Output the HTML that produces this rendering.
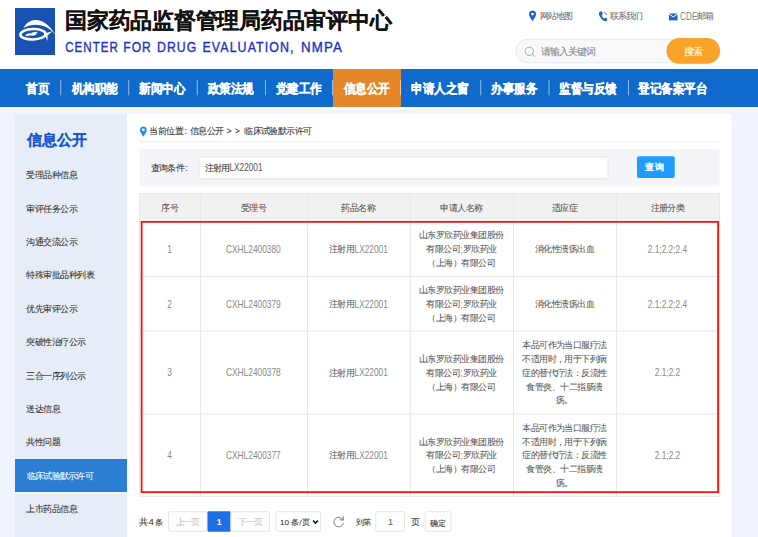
<!DOCTYPE html>
<html><head><meta charset="utf-8">
<style>
*{margin:0;padding:0}
html,body{width:758px;height:537px;overflow:hidden;background:#fff}
#root{position:absolute;left:0;top:0;width:3032.00px;height:2148.00px;transform:scale(0.25);transform-origin:0 0;font-family:"Liberation Sans",sans-serif;color:#333}
.a{position:absolute}
.t{white-space:nowrap;-webkit-text-stroke:0.3px currentColor}
.l{display:inline-block;transform-origin:0 50%;vertical-align:top;-webkit-text-stroke:0;opacity:.85;letter-spacing:0}
.tc .l{opacity:.72}
.en{font-weight:normal;-webkit-text-stroke:1.5px #1e34c4;color:#1e34c4;white-space:nowrap;transform-origin:0 0}
</style></head><body><div id="root">
<div class="a" style="left:0;top:0;width:3032.00px;height:276.00px;background:#fff"></div>
<svg class="a" style="left:60.00px;top:32.00px;width:160.00px;height:188.00px" viewBox="0 0 40 47">
<rect width="40" height="47" fill="#1852b2"/>
<path d="M8.5 20 C14 8.5 31 7.5 42 30 C36 17.5 21 13 8.5 20Z" fill="#fff"/>
<ellipse cx="18" cy="26.3" rx="12.6" ry="5.2" fill="none" stroke="#fff" stroke-width="2.5" transform="rotate(-2 18 26)"/>
<path d="M29 25.5 L37 23.5 L32.5 27.5 L32.5 33 Z" fill="#fff"/>
<path d="M10.2 28 C10.8 25.6 13.5 24.8 16.2 25.4 C17.5 24.2 19 23.6 20.2 24.2 C20.6 23.6 21.6 23.4 22.4 24 C21.8 26.4 19.5 28 16.8 27.6 C14.5 27.3 12.2 28.3 10.2 28Z" fill="#fff"/>
</svg>
<div class="a t" style="left:260.12px;top:29.60px;font-size:87.00px;line-height:104.00px;font-weight:bold;color:#111;-webkit-text-stroke:1.20px #111">国家药品监督管理局药品审评中心</div>
<div class="a en" style="left:260.82px;top:159.60px;font-size:55.60px;line-height:55.60px;letter-spacing:4.80px;transform:scaleX(0.8323)">CENTER</div>
<div class="a en" style="left:492.70px;top:159.60px;font-size:55.60px;line-height:55.60px;letter-spacing:4.80px;transform:scaleX(0.8698)">FOR</div>
<div class="a en" style="left:627.86px;top:159.60px;font-size:55.60px;line-height:55.60px;letter-spacing:4.80px;transform:scaleX(0.8810)">DRUG</div>
<div class="a en" style="left:810.22px;top:159.60px;font-size:55.60px;line-height:55.60px;letter-spacing:4.80px;transform:scaleX(0.8934)">EVALUATION,</div>
<div class="a en" style="left:1203.60px;top:159.60px;font-size:55.60px;line-height:55.60px;letter-spacing:4.80px;transform:scaleX(0.9583)">NMPA</div>
<svg class="a" style="left:2115.20px;top:41.20px;width:30.00px;height:44.80px" viewBox="0 0 8 12"><path d="M4 0.3C1.8 0.3 0.2 2 0.2 4.1 0.2 6.9 4 11.7 4 11.7S7.8 6.9 7.8 4.1C7.8 2 6.2 0.3 4 0.3Z" fill="#1c62c8"/><circle cx="4" cy="4.1" r="1.5" fill="#fff"/></svg>
<div class="a t" style="left:2158.51px;top:38.70px;font-size:37.18px;line-height:49.80px;color:#6f6f6f;letter-spacing:-3.98px">网站地图</div>
<svg class="a" style="left:2394.00px;top:43.60px;width:36.00px;height:42.40px" viewBox="0 0 9 11"><path d="M1.6 0.6 L3.3 0.3 L4.4 3.2 L3.1 4.3 C3.6 5.8 4.6 7.1 5.8 7.9 L7 6.7 L9 8 L8.7 9.8 C8 10.6 6.8 10.8 5.4 10.1 C3 8.8 1 6.3 0.4 3.7 C0 2.2 0.6 1 1.6 0.6Z" fill="#1c62c8"/><path d="M5.2 1.2 C6.8 1.5 7.9 2.6 8.2 4.2" fill="none" stroke="#1c62c8" stroke-width="0.9"/></svg>
<div class="a t" style="left:2438.51px;top:38.70px;font-size:37.18px;line-height:49.80px;color:#6f6f6f;letter-spacing:-3.98px">联系我们</div>
<svg class="a" style="left:2675.20px;top:52.80px;width:36.00px;height:29.60px" viewBox="0 0 9 7.4"><path d="M0 0.9 L4.5 4.3 L9 0.9 L9 7.4 L0 7.4Z" fill="#1c62c8"/><path d="M0.3 0 L8.7 0 L4.5 3.2Z" fill="#1c62c8"/></svg>
<div class="a t" style="left:2720.18px;top:39.90px;font-size:35.39px;line-height:47.40px;color:#6f6f6f;letter-spacing:-3.79px"><span class="l" style="font-size:42.83px;transform:scaleX(0.77);margin-right:-20.79px">CDE</span>邮箱</div>
<div class="a" style="left:2062.00px;top:155.20px;width:818.00px;height:98.00px;border:4.00px solid #e6e7ea;border-radius:50.00px;background:#f8f9fb;box-sizing:border-box"></div>
<svg class="a" style="left:2098.00px;top:186.00px;width:44.80px;height:42.40px" viewBox="0 0 11.2 10.6"><circle cx="4.8" cy="4.8" r="4.2" fill="none" stroke="#a0a0a0" stroke-width="0.95"/><path d="M8 7.9 L10.7 10.3" stroke="#a0a0a0" stroke-width="1"/></svg>
<div class="a t" style="left:2165.21px;top:180.10px;font-size:39.87px;line-height:53.40px;color:#858585;letter-spacing:-4.27px">请输入关键词</div>
<div class="a" style="left:2666.00px;top:152.00px;width:214.00px;height:102.80px;border-radius:52.00px;background:#f9a32b"></div>
<div class="a t" style="left:2735.15px;top:179.60px;font-size:41.22px;line-height:55.20px;color:#fff;letter-spacing:-4.42px">搜索</div>
<div class="a" style="left:0.00px;top:276.40px;width:3032.00px;height:152.40px;background:#106acb"></div>
<div class="a" style="left:1332.00px;top:276.40px;width:272.00px;height:152.40px;background:#e5862b"></div>
<div class="a t" style="left:104.17px;top:321.25px;font-size:45.80px;line-height:68.70px;color:#fff;font-weight:bold;-webkit-text-stroke:1.5px #fff;transform:scaleY(1.12);transform-origin:0 50%">首页</div>
<div class="a t" style="left:286.17px;top:321.25px;font-size:45.80px;line-height:68.70px;color:#fff;font-weight:bold;-webkit-text-stroke:1.5px #fff;transform:scaleY(1.12);transform-origin:0 50%">机构职能</div>
<div class="a t" style="left:557.37px;top:321.25px;font-size:45.80px;line-height:68.70px;color:#fff;font-weight:bold;-webkit-text-stroke:1.5px #fff;transform:scaleY(1.12);transform-origin:0 50%">新闻中心</div>
<div class="a t" style="left:830.17px;top:321.25px;font-size:45.80px;line-height:68.70px;color:#fff;font-weight:bold;-webkit-text-stroke:1.5px #fff;transform:scaleY(1.12);transform-origin:0 50%">政策法规</div>
<div class="a t" style="left:1102.17px;top:321.25px;font-size:45.80px;line-height:68.70px;color:#fff;font-weight:bold;-webkit-text-stroke:1.5px #fff;transform:scaleY(1.12);transform-origin:0 50%">党建工作</div>
<div class="a t" style="left:1374.17px;top:321.25px;font-size:45.80px;line-height:68.70px;color:#fff;font-weight:bold;-webkit-text-stroke:1.5px #fff;transform:scaleY(1.12);transform-origin:0 50%">信息公开</div>
<div class="a t" style="left:1645.37px;top:321.25px;font-size:45.80px;line-height:68.70px;color:#fff;font-weight:bold;-webkit-text-stroke:1.5px #fff;transform:scaleY(1.12);transform-origin:0 50%">申请人之窗</div>
<div class="a t" style="left:1964.57px;top:321.25px;font-size:45.80px;line-height:68.70px;color:#fff;font-weight:bold;-webkit-text-stroke:1.5px #fff;transform:scaleY(1.12);transform-origin:0 50%">办事服务</div>
<div class="a t" style="left:2236.57px;top:321.25px;font-size:45.80px;line-height:68.70px;color:#fff;font-weight:bold;-webkit-text-stroke:1.5px #fff;transform:scaleY(1.12);transform-origin:0 50%">监督与反馈</div>
<div class="a t" style="left:2552.17px;top:321.25px;font-size:45.80px;line-height:68.70px;color:#fff;font-weight:bold;-webkit-text-stroke:1.5px #fff;transform:scaleY(1.12);transform-origin:0 50%">登记备案平台</div>
<div class="a" style="left:241.20px;top:320.00px;width:4.00px;height:61.20px;background:rgba(255,255,255,0.55)"></div>
<div class="a" style="left:513.20px;top:320.00px;width:4.00px;height:61.20px;background:rgba(255,255,255,0.55)"></div>
<div class="a" style="left:787.20px;top:320.00px;width:4.00px;height:61.20px;background:rgba(255,255,255,0.55)"></div>
<div class="a" style="left:1060.00px;top:320.00px;width:4.00px;height:61.20px;background:rgba(255,255,255,0.55)"></div>
<div class="a" style="left:1328.00px;top:320.00px;width:4.00px;height:61.20px;background:rgba(255,255,255,0.55)"></div>
<div class="a" style="left:1600.00px;top:320.00px;width:4.00px;height:61.20px;background:rgba(255,255,255,0.55)"></div>
<div class="a" style="left:1920.80px;top:320.00px;width:4.00px;height:61.20px;background:rgba(255,255,255,0.55)"></div>
<div class="a" style="left:2194.40px;top:320.00px;width:4.00px;height:61.20px;background:rgba(255,255,255,0.55)"></div>
<div class="a" style="left:2512.00px;top:320.00px;width:4.00px;height:61.20px;background:rgba(255,255,255,0.55)"></div>
<div class="a" style="left:0.00px;top:428.80px;width:3032.00px;height:1719.20px;background:#f0f5fd"></div>
<div class="a" style="left:0.00px;top:428.80px;width:3032.00px;height:8.40px;background:#fff"></div>
<div class="a" style="left:60.00px;top:457.20px;width:448.00px;height:1690.80px;background:#e7edf6"></div>
<div class="a t" style="left:107.22px;top:514.10px;font-size:59.60px;line-height:89.40px;color:#1656d2;font-weight:bold;-webkit-text-stroke:1.2px #1656d2">信息公开</div>
<div class="a t" style="left:105.69px;top:674.65px;font-size:37.86px;line-height:50.70px;color:#333;letter-spacing:-4.06px">受理品种信息</div>
<div class="a t" style="left:105.69px;top:808.17px;font-size:37.86px;line-height:50.70px;color:#333;letter-spacing:-4.06px">审评任务公示</div>
<div class="a t" style="left:105.69px;top:941.69px;font-size:37.86px;line-height:50.70px;color:#333;letter-spacing:-4.06px">沟通交流公示</div>
<div class="a t" style="left:105.69px;top:1075.21px;font-size:37.86px;line-height:50.70px;color:#333;letter-spacing:-4.06px">特殊审批品种列表</div>
<div class="a t" style="left:105.69px;top:1208.73px;font-size:37.86px;line-height:50.70px;color:#333;letter-spacing:-4.06px">优先审评公示</div>
<div class="a t" style="left:105.69px;top:1342.25px;font-size:37.86px;line-height:50.70px;color:#333;letter-spacing:-4.06px">突破性治疗公示</div>
<div class="a t" style="left:105.69px;top:1475.77px;font-size:37.86px;line-height:50.70px;color:#333;letter-spacing:-4.06px">三合一序列公示</div>
<div class="a t" style="left:105.69px;top:1609.29px;font-size:37.86px;line-height:50.70px;color:#333;letter-spacing:-4.06px">送达信息</div>
<div class="a t" style="left:105.69px;top:1742.81px;font-size:37.86px;line-height:50.70px;color:#333;letter-spacing:-4.06px">共性问题</div>
<div class="a" style="left:60.00px;top:1836.00px;width:448.00px;height:132.00px;background:#2a7fd5"></div>
<div class="a t" style="left:107.32px;top:1880.13px;font-size:36.96px;line-height:49.50px;color:#fff;letter-spacing:-3.96px">临床试验默示许可</div>
<div class="a" style="left:60.00px;top:1968.00px;width:448.00px;height:5.60px;background:#f5f8fd"></div>
<div class="a t" style="left:105.69px;top:2009.85px;font-size:37.86px;line-height:50.70px;color:#333;letter-spacing:-4.06px">上市药品信息</div>
<div class="a" style="left:508.00px;top:456.00px;width:2418.00px;height:1692.00px;background:#fff"></div>
<svg class="a" style="left:558.80px;top:503.60px;width:28.80px;height:44.40px" viewBox="0 0 8 12"><path d="M4 0.3C1.8 0.3 0.2 2 0.2 4.1 0.2 6.9 4 11.7 4 11.7S7.8 6.9 7.8 4.1C7.8 2 6.2 0.3 4 0.3Z" fill="#1e8ff0"/><circle cx="4" cy="4.1" r="1.6" fill="#fff"/></svg>
<div class="a t" style="left:597.49px;top:497.85px;font-size:37.86px;line-height:50.70px;color:#333;letter-spacing:-4.06px">当前位置</div>
<div class="a t" style="left:737.70px;top:495.00px;font-size:37.60px;line-height:56.40px;color:#333">:</div>
<div class="a t" style="left:758.10px;top:498.09px;font-size:37.50px;line-height:50.22px;color:#333;letter-spacing:-4.02px">信息公开</div>
<div class="a t" style="left:906.69px;top:500.60px;font-size:32.80px;line-height:49.20px;color:#333">&gt;</div>
<div class="a t" style="left:939.89px;top:500.60px;font-size:32.80px;line-height:49.20px;color:#333">&gt;</div>
<div class="a t" style="left:976.09px;top:498.00px;font-size:37.63px;line-height:50.40px;color:#333;letter-spacing:-4.03px">临床试验默示许可</div>
<div class="a" style="left:556.00px;top:564.80px;width:2324.00px;height:4.00px;background:#ebebeb"></div>
<div class="a" style="left:558.00px;top:596.00px;width:2320.40px;height:148.80px;background:#f3f5f9"></div>
<div class="a t" style="left:603.73px;top:647.00px;font-size:36.74px;line-height:49.20px;color:#333;letter-spacing:-3.94px">查询条件</div>
<div class="a t" style="left:740.96px;top:644.60px;font-size:36.00px;line-height:54.00px;color:#333">:</div>
<div class="a" style="left:794.40px;top:626.40px;width:1639.20px;height:90.40px;background:#fff;border:4.00px solid #e4e6ea;border-radius:8.00px;box-sizing:border-box"></div>
<div class="a t" style="left:818.51px;top:645.90px;font-size:37.18px;line-height:49.80px;color:#333;letter-spacing:-3.98px">注射用<span class="l" style="font-size:42.83px;transform:scaleX(0.77);margin-right:-39.44px">LX22001</span></div>
<div class="a" style="left:2547.60px;top:624.80px;width:151.20px;height:87.20px;background:#1f9cfd;border-radius:8.00px"></div>
<div class="a t" style="left:2580.10px;top:640.20px;font-size:37.60px;line-height:56.40px;color:#fff;font-weight:bold">查询</div>
<div class="a" style="left:558.80px;top:774.00px;width:2319.20px;height:112.00px;background:#f1f1f1"></div>
<div class="a" style="left:558.80px;top:772.00px;width:2319.20px;height:4.00px;background:#e8e8e8"></div>
<div class="a" style="left:558.80px;top:884.00px;width:2319.20px;height:4.00px;background:#e8e8e8"></div>
<div class="a" style="left:558.80px;top:1103.60px;width:2319.20px;height:4.00px;background:#e8e8e8"></div>
<div class="a" style="left:558.80px;top:1322.40px;width:2319.20px;height:4.00px;background:#e8e8e8"></div>
<div class="a" style="left:558.80px;top:1653.60px;width:2319.20px;height:4.00px;background:#e8e8e8"></div>
<div class="a" style="left:558.80px;top:1982.80px;width:2319.20px;height:4.00px;background:#e8e8e8"></div>
<div class="a" style="left:556.80px;top:774.00px;width:4.00px;height:1212.80px;background:#e8e8e8"></div>
<div class="a" style="left:799.60px;top:774.00px;width:4.00px;height:1212.80px;background:#e8e8e8"></div>
<div class="a" style="left:1228.00px;top:774.00px;width:4.00px;height:1212.80px;background:#e8e8e8"></div>
<div class="a" style="left:1639.20px;top:774.00px;width:4.00px;height:1212.80px;background:#e8e8e8"></div>
<div class="a" style="left:2052.00px;top:774.00px;width:4.00px;height:1212.80px;background:#e8e8e8"></div>
<div class="a" style="left:2464.00px;top:774.00px;width:4.00px;height:1212.80px;background:#e8e8e8"></div>
<div class="a" style="left:2876.00px;top:774.00px;width:4.00px;height:1212.80px;background:#e8e8e8"></div>
<div class="a t " style="left:556.78px;top:806.40px;width:242.80px;text-align:center;font-size:37.63px;line-height:50.40px;color:#555;letter-spacing:-4.03px">序号</div>
<div class="a t " style="left:799.58px;top:806.40px;width:428.40px;text-align:center;font-size:37.63px;line-height:50.40px;color:#555;letter-spacing:-4.03px">受理号</div>
<div class="a t " style="left:1227.98px;top:806.40px;width:411.20px;text-align:center;font-size:37.63px;line-height:50.40px;color:#555;letter-spacing:-4.03px">药品名称</div>
<div class="a t " style="left:1639.18px;top:806.40px;width:412.80px;text-align:center;font-size:37.63px;line-height:50.40px;color:#555;letter-spacing:-4.03px">申请人名称</div>
<div class="a t " style="left:2051.98px;top:806.40px;width:412.00px;text-align:center;font-size:37.63px;line-height:50.40px;color:#555;letter-spacing:-4.03px">适应症</div>
<div class="a t " style="left:2463.98px;top:806.40px;width:412.00px;text-align:center;font-size:37.63px;line-height:50.40px;color:#555;letter-spacing:-4.03px">注册分类</div>
<div class="a t tc" style="left:556.78px;top:968.30px;width:242.80px;text-align:center;font-size:37.63px;line-height:55.00px;color:#5a5a5a;letter-spacing:-4.03px"><span class="l" style="font-size:43.34px;transform:scaleX(0.77);margin-right:-5.55px">1</span></div>
<div class="a t tc" style="left:799.58px;top:968.30px;width:428.40px;text-align:center;font-size:37.63px;line-height:55.00px;color:#5a5a5a;letter-spacing:-4.03px"><span class="l" style="font-size:43.34px;transform:scaleX(0.77);margin-right:-65.40px">CXHL2400380</span></div>
<div class="a t tc" style="left:1227.98px;top:968.30px;width:411.20px;text-align:center;font-size:37.63px;line-height:55.00px;color:#5a5a5a;letter-spacing:-4.03px">注射用<span class="l" style="font-size:43.34px;transform:scaleX(0.77);margin-right:-39.92px">LX22001</span></div>
<div class="a t tc" style="left:1639.18px;top:913.30px;width:412.80px;text-align:center;font-size:37.63px;line-height:55.00px;color:#5a5a5a;letter-spacing:-4.03px">山东罗欣药业集团股份</div>
<div class="a t tc" style="left:1639.18px;top:968.30px;width:412.80px;text-align:center;font-size:37.63px;line-height:55.00px;color:#5a5a5a;letter-spacing:-4.03px">有限公司<span class="l" style="font-size:43.34px;transform:scaleX(0.77);margin-right:-2.77px">;</span>罗欣药业</div>
<div class="a t tc" style="left:1639.18px;top:1023.30px;width:412.80px;text-align:center;font-size:37.63px;line-height:55.00px;color:#5a5a5a;letter-spacing:-4.03px">（上海）有限公司</div>
<div class="a t tc" style="left:2051.98px;top:968.30px;width:412.00px;text-align:center;font-size:37.63px;line-height:55.00px;color:#5a5a5a;letter-spacing:-4.03px">消化性溃疡出血</div>
<div class="a t tc" style="left:2463.98px;top:968.30px;width:412.00px;text-align:center;font-size:37.63px;line-height:55.00px;color:#5a5a5a;letter-spacing:-4.03px"><span class="l" style="font-size:43.34px;transform:scaleX(0.77);margin-right:-47.13px">2.1;2.2;2.4</span></div>
<div class="a t tc" style="left:556.78px;top:1187.50px;width:242.80px;text-align:center;font-size:37.63px;line-height:55.00px;color:#5a5a5a;letter-spacing:-4.03px"><span class="l" style="font-size:43.34px;transform:scaleX(0.77);margin-right:-5.55px">2</span></div>
<div class="a t tc" style="left:799.58px;top:1187.50px;width:428.40px;text-align:center;font-size:37.63px;line-height:55.00px;color:#5a5a5a;letter-spacing:-4.03px"><span class="l" style="font-size:43.34px;transform:scaleX(0.77);margin-right:-65.40px">CXHL2400379</span></div>
<div class="a t tc" style="left:1227.98px;top:1187.50px;width:411.20px;text-align:center;font-size:37.63px;line-height:55.00px;color:#5a5a5a;letter-spacing:-4.03px">注射用<span class="l" style="font-size:43.34px;transform:scaleX(0.77);margin-right:-39.92px">LX22001</span></div>
<div class="a t tc" style="left:1639.18px;top:1132.50px;width:412.80px;text-align:center;font-size:37.63px;line-height:55.00px;color:#5a5a5a;letter-spacing:-4.03px">山东罗欣药业集团股份</div>
<div class="a t tc" style="left:1639.18px;top:1187.50px;width:412.80px;text-align:center;font-size:37.63px;line-height:55.00px;color:#5a5a5a;letter-spacing:-4.03px">有限公司<span class="l" style="font-size:43.34px;transform:scaleX(0.77);margin-right:-2.77px">;</span>罗欣药业</div>
<div class="a t tc" style="left:1639.18px;top:1242.50px;width:412.80px;text-align:center;font-size:37.63px;line-height:55.00px;color:#5a5a5a;letter-spacing:-4.03px">（上海）有限公司</div>
<div class="a t tc" style="left:2051.98px;top:1187.50px;width:412.00px;text-align:center;font-size:37.63px;line-height:55.00px;color:#5a5a5a;letter-spacing:-4.03px">消化性溃疡出血</div>
<div class="a t tc" style="left:2463.98px;top:1187.50px;width:412.00px;text-align:center;font-size:37.63px;line-height:55.00px;color:#5a5a5a;letter-spacing:-4.03px"><span class="l" style="font-size:43.34px;transform:scaleX(0.77);margin-right:-47.13px">2.1;2.2;2.4</span></div>
<div class="a t tc" style="left:556.78px;top:1462.50px;width:242.80px;text-align:center;font-size:37.63px;line-height:55.00px;color:#5a5a5a;letter-spacing:-4.03px"><span class="l" style="font-size:43.34px;transform:scaleX(0.77);margin-right:-5.55px">3</span></div>
<div class="a t tc" style="left:799.58px;top:1462.50px;width:428.40px;text-align:center;font-size:37.63px;line-height:55.00px;color:#5a5a5a;letter-spacing:-4.03px"><span class="l" style="font-size:43.34px;transform:scaleX(0.77);margin-right:-65.40px">CXHL2400378</span></div>
<div class="a t tc" style="left:1227.98px;top:1462.50px;width:411.20px;text-align:center;font-size:37.63px;line-height:55.00px;color:#5a5a5a;letter-spacing:-4.03px">注射用<span class="l" style="font-size:43.34px;transform:scaleX(0.77);margin-right:-39.92px">LX22001</span></div>
<div class="a t tc" style="left:1639.18px;top:1407.50px;width:412.80px;text-align:center;font-size:37.63px;line-height:55.00px;color:#5a5a5a;letter-spacing:-4.03px">山东罗欣药业集团股份</div>
<div class="a t tc" style="left:1639.18px;top:1462.50px;width:412.80px;text-align:center;font-size:37.63px;line-height:55.00px;color:#5a5a5a;letter-spacing:-4.03px">有限公司<span class="l" style="font-size:43.34px;transform:scaleX(0.77);margin-right:-2.77px">;</span>罗欣药业</div>
<div class="a t tc" style="left:1639.18px;top:1517.50px;width:412.80px;text-align:center;font-size:37.63px;line-height:55.00px;color:#5a5a5a;letter-spacing:-4.03px">（上海）有限公司</div>
<div class="a t tc" style="left:2051.98px;top:1352.50px;width:412.00px;text-align:center;font-size:37.63px;line-height:55.00px;color:#5a5a5a;letter-spacing:-4.03px">本品可作为当口服疗法</div>
<div class="a t tc" style="left:2051.98px;top:1407.50px;width:412.00px;text-align:center;font-size:37.63px;line-height:55.00px;color:#5a5a5a;letter-spacing:-4.03px">不适用时，用于下列病</div>
<div class="a t tc" style="left:2051.98px;top:1462.50px;width:412.00px;text-align:center;font-size:37.63px;line-height:55.00px;color:#5a5a5a;letter-spacing:-4.03px">症的替代疗法：反流性</div>
<div class="a t tc" style="left:2051.98px;top:1517.50px;width:412.00px;text-align:center;font-size:37.63px;line-height:55.00px;color:#5a5a5a;letter-spacing:-4.03px">食管炎、十二指肠溃</div>
<div class="a t tc" style="left:2051.98px;top:1572.50px;width:412.00px;text-align:center;font-size:37.63px;line-height:55.00px;color:#5a5a5a;letter-spacing:-4.03px">疡。</div>
<div class="a t tc" style="left:2463.98px;top:1462.50px;width:412.00px;text-align:center;font-size:37.63px;line-height:55.00px;color:#5a5a5a;letter-spacing:-4.03px"><span class="l" style="font-size:43.34px;transform:scaleX(0.77);margin-right:-30.50px">2.1;2.2</span></div>
<div class="a t tc" style="left:556.78px;top:1792.70px;width:242.80px;text-align:center;font-size:37.63px;line-height:55.00px;color:#5a5a5a;letter-spacing:-4.03px"><span class="l" style="font-size:43.34px;transform:scaleX(0.77);margin-right:-5.55px">4</span></div>
<div class="a t tc" style="left:799.58px;top:1792.70px;width:428.40px;text-align:center;font-size:37.63px;line-height:55.00px;color:#5a5a5a;letter-spacing:-4.03px"><span class="l" style="font-size:43.34px;transform:scaleX(0.77);margin-right:-65.40px">CXHL2400377</span></div>
<div class="a t tc" style="left:1227.98px;top:1792.70px;width:411.20px;text-align:center;font-size:37.63px;line-height:55.00px;color:#5a5a5a;letter-spacing:-4.03px">注射用<span class="l" style="font-size:43.34px;transform:scaleX(0.77);margin-right:-39.92px">LX22001</span></div>
<div class="a t tc" style="left:1639.18px;top:1737.70px;width:412.80px;text-align:center;font-size:37.63px;line-height:55.00px;color:#5a5a5a;letter-spacing:-4.03px">山东罗欣药业集团股份</div>
<div class="a t tc" style="left:1639.18px;top:1792.70px;width:412.80px;text-align:center;font-size:37.63px;line-height:55.00px;color:#5a5a5a;letter-spacing:-4.03px">有限公司<span class="l" style="font-size:43.34px;transform:scaleX(0.77);margin-right:-2.77px">;</span>罗欣药业</div>
<div class="a t tc" style="left:1639.18px;top:1847.70px;width:412.80px;text-align:center;font-size:37.63px;line-height:55.00px;color:#5a5a5a;letter-spacing:-4.03px">（上海）有限公司</div>
<div class="a t tc" style="left:2051.98px;top:1682.70px;width:412.00px;text-align:center;font-size:37.63px;line-height:55.00px;color:#5a5a5a;letter-spacing:-4.03px">本品可作为当口服疗法</div>
<div class="a t tc" style="left:2051.98px;top:1737.70px;width:412.00px;text-align:center;font-size:37.63px;line-height:55.00px;color:#5a5a5a;letter-spacing:-4.03px">不适用时，用于下列病</div>
<div class="a t tc" style="left:2051.98px;top:1792.70px;width:412.00px;text-align:center;font-size:37.63px;line-height:55.00px;color:#5a5a5a;letter-spacing:-4.03px">症的替代疗法：反流性</div>
<div class="a t tc" style="left:2051.98px;top:1847.70px;width:412.00px;text-align:center;font-size:37.63px;line-height:55.00px;color:#5a5a5a;letter-spacing:-4.03px">食管炎、十二指肠溃</div>
<div class="a t tc" style="left:2051.98px;top:1902.70px;width:412.00px;text-align:center;font-size:37.63px;line-height:55.00px;color:#5a5a5a;letter-spacing:-4.03px">疡。</div>
<div class="a t tc" style="left:2463.98px;top:1792.70px;width:412.00px;text-align:center;font-size:37.63px;line-height:55.00px;color:#5a5a5a;letter-spacing:-4.03px"><span class="l" style="font-size:43.34px;transform:scaleX(0.77);margin-right:-30.50px">2.1;2.2</span></div>
<div class="a" style="left:562.80px;top:884.20px;width:2313.60px;height:1087.60px;border:7.20px solid #fa0d0d;box-sizing:border-box"></div>
<div class="a t" style="left:556.58px;top:2064.30px;font-size:35.39px;line-height:47.40px;color:#333;letter-spacing:-3.79px">共</div>
<div class="a t" style="left:594.46px;top:2059.20px;font-size:38.40px;line-height:57.60px;color:#333">4</div>
<div class="a t" style="left:621.07px;top:2065.80px;font-size:33.15px;line-height:44.40px;color:#333;letter-spacing:-3.55px">条</div>
<div class="a" style="left:672.00px;top:2045.20px;width:158.40px;height:81.60px;border:4.00px solid #e5e5e5;border-radius:8.00px;box-sizing:border-box;background:#fff;"></div>
<div class="a t " style="left:669.33px;top:2064.60px;width:160.00px;text-align:center;font-size:34.94px;line-height:46.80px;color:#c6c6c6;letter-spacing:-3.74px">上一页</div>
<div class="a" style="left:830.40px;top:2045.20px;width:91.60px;height:81.60px;background:#1c6fe6;border-radius:4.00px"></div>
<div class="a t " style="left:832.20px;top:2062.20px;width:88.00px;text-align:center;font-size:34.40px;line-height:51.60px;color:#fff;font-weight:bold">1</div>
<div class="a" style="left:922.00px;top:2045.20px;width:158.00px;height:81.60px;border:4.00px solid #e5e5e5;border-radius:8.00px;box-sizing:border-box;background:#fff;"></div>
<div class="a t " style="left:919.13px;top:2064.60px;width:160.00px;text-align:center;font-size:34.94px;line-height:46.80px;color:#c6c6c6;letter-spacing:-3.74px">下一页</div>
<div class="a" style="left:1102.40px;top:2045.20px;width:181.60px;height:81.60px;border:4.00px solid #e5e5e5;border-radius:8.00px;box-sizing:border-box;background:#fff;"></div>
<div class="a t" style="left:1120.30px;top:2063.70px;font-size:32.40px;line-height:48.60px;color:#333">10 条/页</div>
<svg class="a" style="left:1248.80px;top:2078.00px;width:26.00px;height:20.00px" viewBox="0 0 6.5 5"><path d="M0.8 0.9 L3.25 3.6 L5.7 0.9" fill="none" stroke="#111" stroke-width="1.5"/></svg>
<svg class="a" style="left:1332.00px;top:2062.40px;width:45.60px;height:48.80px" viewBox="0 0 11.4 12.2"><path d="M9.9 4.2 A4.8 4.8 0 1 0 10.4 7.6" fill="none" stroke="#777" stroke-width="1"/><path d="M10.3 0.8 L10.2 4.6 L6.6 4.2" fill="none" stroke="#777" stroke-width="1"/></svg>
<div class="a t" style="left:1422.29px;top:2066.10px;font-size:32.70px;line-height:43.80px;color:#444;letter-spacing:-3.50px">到第</div>
<div class="a" style="left:1501.20px;top:2045.20px;width:118.80px;height:81.60px;border:4.00px solid #e5e5e5;border-radius:8.00px;box-sizing:border-box;background:#fff;"></div>
<div class="a t " style="left:1506.40px;top:2061.00px;width:112.00px;text-align:center;font-size:36.00px;line-height:54.00px;color:#555">1</div>
<div class="a t" style="left:1643.78px;top:2064.30px;font-size:35.39px;line-height:47.40px;color:#444;letter-spacing:-3.79px">页</div>
<div class="a" style="left:1698.40px;top:2045.20px;width:107.60px;height:81.60px;border:4.00px solid #e5e5e5;border-radius:8.00px;box-sizing:border-box;background:#fff;"></div>
<div class="a t " style="left:1698.22px;top:2069.00px;width:104.00px;text-align:center;font-size:33.15px;line-height:44.40px;color:#333;letter-spacing:-3.55px">确定</div>
</div></body></html>
